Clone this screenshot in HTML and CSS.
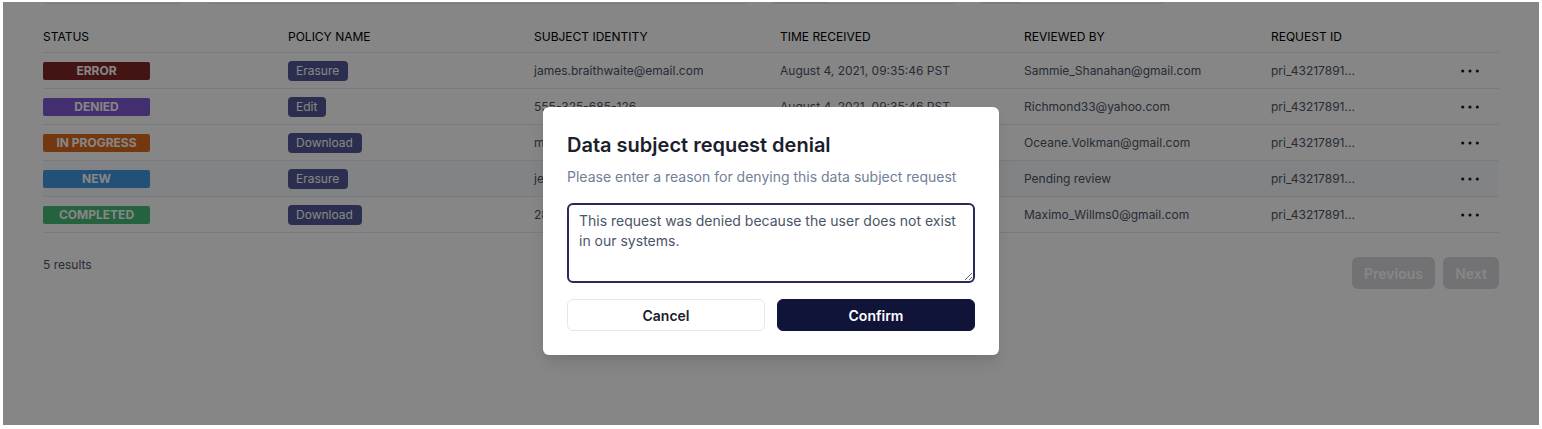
FILE: index.html
```html
<!DOCTYPE html>
<html lang="en">
<head>
<meta charset="utf-8">
<title>Data subject requests</title>
<link rel="stylesheet" href="styles.css">
</head>
<body>
<div class="frame">
  <div class="content">
    <div class="filters">
      <div class="field f1"></div>
      <div class="field f2"></div>
      <div class="field f3"><span class="addon a3"></span></div>
      <div class="field f4"><span class="addon a4"></span></div>
    </div>

    <div class="table">
      <div class="row head">
        <div class="cell">STATUS</div>
        <div class="cell">POLICY NAME</div>
        <div class="cell">SUBJECT IDENTITY</div>
        <div class="cell">TIME RECEIVED</div>
        <div class="cell">REVIEWED BY</div>
        <div class="cell">REQUEST ID</div>
        <div class="cell"></div>
      </div>

      <div class="row">
        <div class="cell"><span class="status error">ERROR</span></div>
        <div class="cell"><span class="policy">Erasure</span></div>
        <div class="cell">james.braithwaite@email.com</div>
        <div class="cell">August 4, 2021, 09:35:46 PST</div>
        <div class="cell">Sammie_Shanahan@gmail.com</div>
        <div class="cell">pri_43217891...</div>
        <div class="cell act"><svg class="dots" viewBox="0 0 18 4" width="18" height="4"><circle cx="1.7" cy="2" r="1.6"/><circle cx="9" cy="2" r="1.6"/><circle cx="16.3" cy="2" r="1.6"/></svg></div>
      </div>

      <div class="row">
        <div class="cell"><span class="status denied">DENIED</span></div>
        <div class="cell"><span class="policy">Edit</span></div>
        <div class="cell">555-325-685-126</div>
        <div class="cell">August 4, 2021, 09:35:46 PST</div>
        <div class="cell">Richmond33@yahoo.com</div>
        <div class="cell">pri_43217891...</div>
        <div class="cell act"><svg class="dots" viewBox="0 0 18 4" width="18" height="4"><circle cx="1.7" cy="2" r="1.6"/><circle cx="9" cy="2" r="1.6"/><circle cx="16.3" cy="2" r="1.6"/></svg></div>
      </div>

      <div class="row">
        <div class="cell"><span class="status progress">IN PROGRESS</span></div>
        <div class="cell"><span class="policy">Download</span></div>
        <div class="cell">milo.garrison@email.com</div>
        <div class="cell">August 4, 2021, 09:35:46 PST</div>
        <div class="cell">Oceane.Volkman@gmail.com</div>
        <div class="cell">pri_43217891...</div>
        <div class="cell act"><svg class="dots" viewBox="0 0 18 4" width="18" height="4"><circle cx="1.7" cy="2" r="1.6"/><circle cx="9" cy="2" r="1.6"/><circle cx="16.3" cy="2" r="1.6"/></svg></div>
      </div>

      <div class="row hover">
        <div class="cell"><span class="status new">NEW</span></div>
        <div class="cell"><span class="policy">Erasure</span></div>
        <div class="cell">jeremy.walsh@email.com</div>
        <div class="cell">August 4, 2021, 09:35:46 PST</div>
        <div class="cell">Pending review</div>
        <div class="cell">pri_43217891...</div>
        <div class="cell act"><svg class="dots" viewBox="0 0 18 4" width="18" height="4"><circle cx="1.7" cy="2" r="1.6"/><circle cx="9" cy="2" r="1.6"/><circle cx="16.3" cy="2" r="1.6"/></svg></div>
      </div>

      <div class="row">
        <div class="cell"><span class="status completed">COMPLETED</span></div>
        <div class="cell"><span class="policy">Download</span></div>
        <div class="cell">283-456-789-012</div>
        <div class="cell">August 4, 2021, 09:35:46 PST</div>
        <div class="cell">Maximo_Willms0@gmail.com</div>
        <div class="cell">pri_43217891...</div>
        <div class="cell act"><svg class="dots" viewBox="0 0 18 4" width="18" height="4"><circle cx="1.7" cy="2" r="1.6"/><circle cx="9" cy="2" r="1.6"/><circle cx="16.3" cy="2" r="1.6"/></svg></div>
      </div>
    </div>

    <div class="footer">
      <span class="results">5 results</span>
      <div class="pager">
        <button class="pbtn prev" disabled>Previous</button>
        <button class="pbtn next" disabled>Next</button>
      </div>
    </div>
  </div>

  <div class="overlay">
    <div class="modal">
      <h2 class="mtitle">Data subject request denial</h2>
      <p class="msub">Please enter a reason for denying this data subject request</p>
      <textarea class="reason">This request was denied because the user does not exist in our systems.</textarea>
      <div class="mactions">
        <button class="mbtn cancel">Cancel</button>
        <button class="mbtn confirm">Confirm</button>
      </div>
    </div>
  </div>
</div>
</body>
</html>
```

FILE: styles.css
```css
* { box-sizing: border-box; }

html, body {
  margin: 0;
  padding: 0;
  background: #ffffff;
  font-family: Inter, "Noto Sans", "Liberation Sans", sans-serif;
}

.frame {
  position: relative;
  margin: 2px 3px 4px 3px;
  height: 423px;
  overflow: hidden;
  background: #ffffff;
}

.content {
  padding: 0 40px;
}

/* cut-off filter bar */
.filters {
  display: flex;
  gap: 21px;
  margin-top: -30px;
  height: 32px;
}
.field {
  height: 32px;
  border: 1px solid #E2E8F0;
  border-radius: 6px;
  display: flex;
  overflow: hidden;
}
.f1 { width: 141px; }
.f2 { width: 544px; }
.f3 { width: 187px; }
.f4 { width: 188px; }
.addon { background: #E2E8F0; height: 100%; }
.a3 { width: 56px; }
.a4 { width: 41px; }

/* table */
.table {
  margin-top: 16px;
}
.row {
  display: grid;
  grid-template-columns: 245px 246px 246px 244px 247px 169px 59px;
  height: 36px;
  border-bottom: 1px solid #E2E8F0;
  align-items: center;
  font-size: 12px;
  color: #4A5568;
}
.row.head {
  height: 33px;
  font-weight: 400;
  color: #000000;
  padding-top: 1px;
}
.row.hover { background: #F7FAFC; }

.cell {
  white-space: nowrap;
  display: flex;
  align-items: center;
}
.cell.act { justify-content: center; }
.dots { fill: #1A202C; display: block; margin-left: 1px; }

.status {
  width: 107px;
  height: 18px;
  border-radius: 2px;
  color: #ffffff;
  font-weight: 700;
  font-size: 12px;
  display: flex;
  align-items: center;
  justify-content: center;
}
.error { background: #822727; }
.denied { background: #805AD5; }
.progress { background: #DD6B20; }
.new { background: #4299E1; }
.completed { background: #48BB78; }

.policy {
  height: 20px;
  padding: 0 9px 0 8px;
  border-radius: 4px;
  background: #525894;
  color: #ffffff;
  font-size: 12px;
  display: inline-flex;
  align-items: center;
}

/* footer */
.footer {
  display: flex;
  justify-content: space-between;
  align-items: flex-start;
  margin-top: 24px;
}
.results {
  font-size: 12px;
  line-height: 16px;
  color: #4A5568;
}
.pager {
  display: flex;
  gap: 8px;
}
.pbtn {
  height: 32px;
  padding: 0 12px;
  border: 0;
  border-radius: 6px;
  background: #D9D9DC;
  color: #ffffff;
  font-family: inherit;
  font-size: 14px;
  font-weight: 600;
}
.prev { width: 83px; }
.next { width: 56px; }

/* modal */
.overlay {
  position: absolute;
  inset: 0;
  background: rgba(0, 0, 0, 0.475);
  display: flex;
  justify-content: center;
  align-items: flex-start;
  padding-top: 105px;
}
.modal {
  width: 456px;
  background: #ffffff;
  border-radius: 6px;
  padding: 24px;
  box-shadow: 0 10px 15px -3px rgba(0,0,0,0.1), 0 4px 6px -2px rgba(0,0,0,0.05);
  display: flex;
  flex-direction: column;
}
.mtitle {
  margin: 0 0 8px 0;
  font-size: 20px;
  line-height: 28px;
  font-weight: 600;
  color: #1A202C;
}
.msub {
  margin: 0 0 16px 0;
  font-size: 14px;
  line-height: 20px;
  color: #718096;
}
.reason {
  display: block;
  width: 408px;
  height: 80px;
  margin: 0 0 16px 0;
  padding: 6px 10px;
  border: 2px solid #272B55;
  border-radius: 6px;
  font-family: inherit;
  font-size: 14px;
  line-height: 20px;
  color: #4A5568;
  resize: vertical;
  outline: none;
}
.mactions {
  display: flex;
  gap: 12px;
}
.mbtn {
  flex: 1;
  height: 32px;
  border-radius: 6px;
  font-family: inherit;
  font-size: 14px;
  font-weight: 600;
}
.cancel {
  background: #ffffff;
  border: 1px solid #E2E8F0;
  color: #1A202C;
}
.confirm {
  background: #111439;
  border: 1px solid #111439;
  color: #ffffff;
}
```
